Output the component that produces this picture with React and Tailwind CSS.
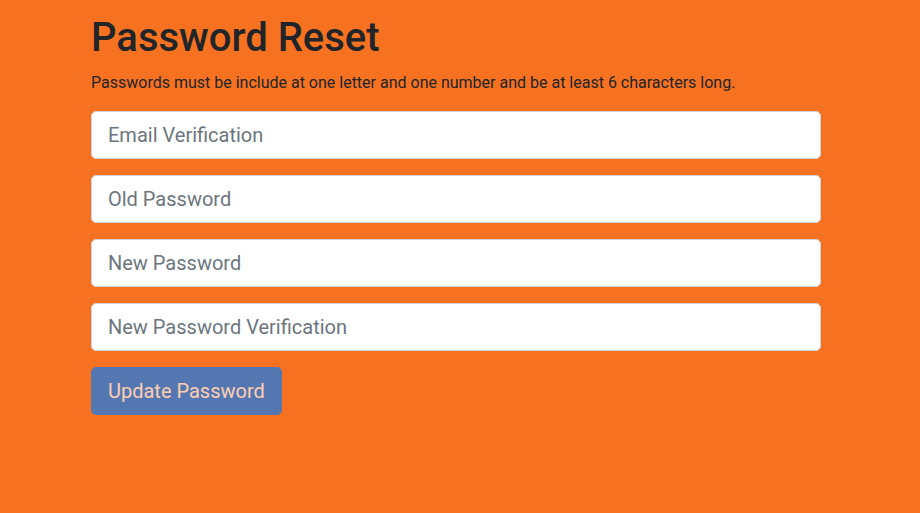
import React from 'react';

const fields = ['Email Verification', 'Old Password', 'New Password', 'New Password Verification'];

export default function App() {
  return (
    <div className="min-h-[513px] w-full bg-[#f77220] font-['Roboto',sans-serif] text-[#212529]">
      <div className="ml-[91px] w-[730px] pt-[14px]">
        <h1 className="text-[40px] font-medium leading-[1.2]">Password Reset</h1>
        <p className="mt-[9px] text-[16px] leading-[1.5]">
          Passwords must be include at one letter and one number and be at least 6 characters long.
        </p>
        <form className="mt-[16px] flex flex-col gap-[16px]" onSubmit={(e) => e.preventDefault()}>
          {fields.map((f) => (
            <input
              key={f}
              type={f.startsWith('Email') ? 'email' : 'password'}
              placeholder={f}
              className="h-[48px] w-full rounded-[5px] border border-[#ced4da] bg-white px-[16px] text-[20px] text-[#495057] placeholder:text-[#6c757d] outline-none"
            />
          ))}
          <div>
            <button
              type="submit"
              disabled
              className="h-[48px] rounded-[5px] border border-[#007bff] bg-[#007bff] px-[16px] text-[20px] text-white opacity-65"
            >
              Update Password
            </button>
          </div>
        </form>
      </div>
    </div>
  );
}
